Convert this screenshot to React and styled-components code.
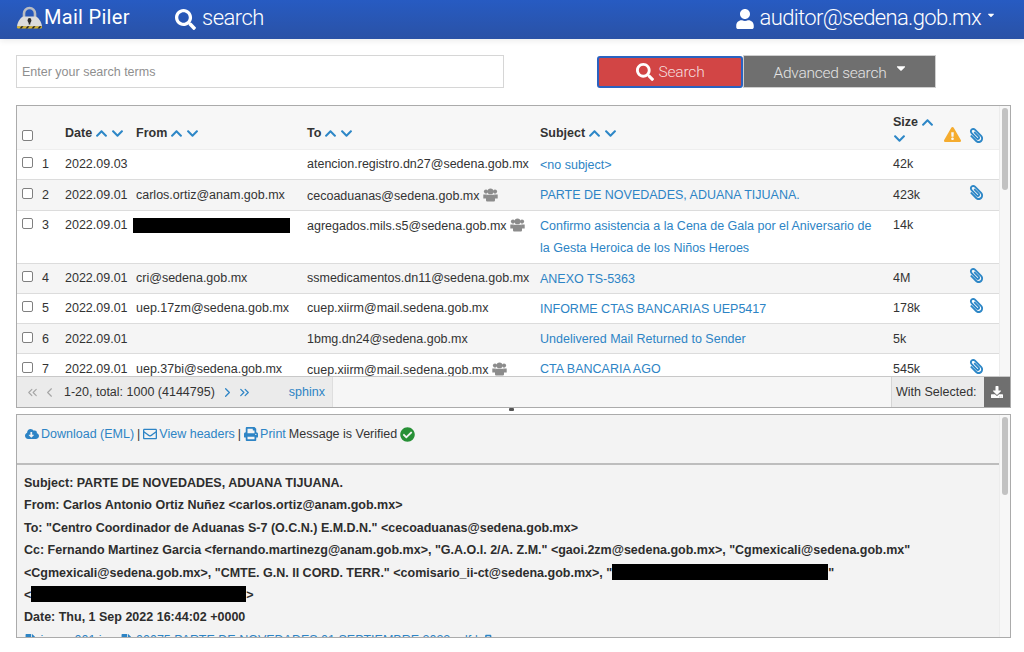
import React from "react";
import styled, { createGlobalStyle } from "styled-components";
import {
  FaSearch, FaUser, FaPaperclip, FaExclamationTriangle, FaChevronUp, FaChevronDown,
  FaCloudDownloadAlt, FaRegEnvelope, FaPrint, FaCheckCircle, FaDownload, FaCaretDown, FaFile, FaBriefcase,
} from "react-icons/fa";
import { ChevronsLeft, ChevronLeft, ChevronRight, ChevronsRight } from "lucide-react";

const Global = createGlobalStyle`
  html, body { margin: 0; padding: 0; background: #fff; }
  body { font-family: "Liberation Sans", Arial, sans-serif; font-size: 12.5px; color: #333; width: 1024px; height: 652px; overflow: hidden; }
  * { box-sizing: border-box; }
`;

const Page = styled.div`display: flex; flex-direction: column; width: 1024px; height: 652px;`;
const TopBar = styled.header`
  height: 39px; flex: none; display: flex; align-items: flex-start; padding-top: 5px; color: #fff;
  background: linear-gradient(#275bc2, #2a52a6);
  box-shadow: 0 2px 6px rgba(0,0,0,.08);
  font-family: Roboto, sans-serif; font-weight: 300;
`;
const Brand = styled.div`display: flex; align-items: center; margin-left: 16px; width: 159px; font-size: 20px; font-family: Roboto, sans-serif; font-weight: 400; letter-spacing: .3px;`;
const NavSearch = styled.div`display: flex; align-items: center; gap: 6px; font-size: 22px; letter-spacing: -.5px; svg { font-size: 21px; margin-top: 4px; }`;
const UserMenu = styled.div`margin-left: auto; margin-right: 28px; display: flex; align-items: center; gap: 5px; font-size: 22px; letter-spacing: -.66px;
  svg.user { font-size: 20px; margin-top: 3px; } svg.caret { font-size: 10px; margin: -6px 0 0 0; }`;

const SearchRow = styled.div`height: 66px; flex: none; padding: 16px 0 0 16px; display: flex; align-items: flex-start;`;
const SearchInput = styled.input`
  width: 488px; height: 33px; border: 1px solid #d6d6d6; padding: 0 5px; font: 12.5px "Liberation Sans", Arial, sans-serif; outline: none; background: #fff;
  &::placeholder { color: #8f8f8f; opacity: 1; }
`;
const SearchBtn = styled.button`
  width: 146px; height: 32px; margin: 1px 0 0 93px; background: #d24545; border: 2px solid #2a62c0; border-radius: 3px; color: #f5dede;
  display: flex; align-items: center; justify-content: center; gap: 5px; font: 300 15.5px Roboto, sans-serif; letter-spacing: -.2px; padding: 0;
  svg { color: #fff; font-size: 18px; }
`;
const AdvBtn = styled.button`
  width: 193px; height: 33px; background: #6f6f6f; border: 1px solid #cfcfcf; color: #e4e4e4; display: flex; align-items: center; justify-content: center; gap: 8px;
  font: 300 15.5px Roboto, sans-serif; letter-spacing: -.25px; padding: 2px 0 0 3px;
  svg { color: #fff; font-size: 14px; margin-top: -9px; }
`;

const Panel = styled.section`
  margin-left: 16px; width: 995px; border: 1px solid #ababab; flex: none; display: flex; flex-direction: column; overflow: hidden;
  background: ${p => p.$bg || "#fff"}; height: ${p => p.$h}px;
`;
const ScrollWrap = styled.div`flex: 1; min-height: 0; display: flex;`;
const Scroller = styled.div`flex: 1; min-width: 0; overflow: hidden;`;
const Track = styled.div`
  width: 11px; flex: none; background: #f7f7f7; border-left: 1px solid #ececec; padding: 2px 2px 0 2px;
  &::before { content: ""; display: block; height: ${p => p.$thumb}px; background: #c2c2c2; border-radius: 3px; }
`;
const Cols = `grid-template-columns: 25px 23px 71px 171px 233px 353px 51px 25px 31px;`;
const HeadRow = styled.div`
  display: grid; ${Cols} height: 44px; background: #f7f7f7; border-bottom: 1px solid #eee; font-weight: 700; align-items: center;
`;
const Row = styled.div`
  display: grid; ${Cols} background: ${p => p.$alt ? "#f5f5f5" : "#fff"}; border-bottom: 1px solid #dcdcdc; height: ${p => p.$h || 30.3}px; padding-top: 7.4px; line-height: 15px; color: #333;
`;
const HeadCell = styled.div`display: flex; flex-wrap: wrap; align-items: center; column-gap: 3px; padding-top: ${p => p.$pad ?? 11}px; line-height: ${p => p.$lh || 15}px;`;
const Arrow = styled.span`color: #2d87c7; display: inline-flex; font-size: 13px;`;
const Check = styled.span`display: block; width: 11px; height: 11px; border: 1px solid #808080; border-radius: 2px; background: #fff; margin: ${p => p.$m || "0 0 0 5px"};`;
const Link = styled.a`color: #2d84c5; text-decoration: none;`;
const Subject = styled(Link)`display: block; line-height: 22.5px; margin-top: -3.4px; padding-right: 14px;`;
const GroupSvg = styled.svg`margin-left: 3px; vertical-align: -2px;`;
const Clip = styled.span`color: #2d87c7; font-size: 15px; display: block; width: 15px; transform: scaleX(-1); margin-top: ${p => p.$mt ?? -3}px; line-height: 1;`;
const Warn = styled.span`color: #f5ac2f; font-size: 17px; line-height: 1; display: block; margin-top: 17px;`;
const BlackInline = styled.span`display: inline-block; background: #000; height: ${p => p.$hh || 15}px; width: ${p => p.$w}px; vertical-align: ${p => p.$va || "-3px"}; margin-left: ${p => p.$ml || 0}px;`;

const Pager = styled.div`height: 31px; flex: none; border-top: 1px solid #c8c8c8; display: flex; background: #f6f6f6; align-items: stretch;`;
const PagerLeft = styled.div`width: 316px; background: #ebebeb; border-right: 1px solid #dedede; display: flex; align-items: center; padding-left: 8px;`;
const PageIcons = styled.span`display: inline-flex; gap: ${p => p.$gap || 6}px; color: ${p => p.$on ? "#2d84c5" : "#a5a5a5"}; margin: ${p => p.$m};`;
const Sphinx = styled(Link)`margin-left: 37px;`;
const SelectedLabel = styled.div`margin-left: auto; width: 93px; background: #ebebeb; border-left: 1px solid #d5d5d5; display: flex; align-items: center; padding-left: 4px; white-space: nowrap;`;
const DlBtn = styled.div`width: 26px; background: #6f6f6f; color: #fff; display: flex; align-items: center; justify-content: center; font-size: 12px;`;

const Splitter = styled.div`height: 6px; flex: none; display: flex; justify-content: center;
  &::before { content: ""; display: block; width: 5px; height: 3px; background: #555; margin: 0 0 0 -1px; border-radius: 1px; }
`;

const Toolbar = styled.div`height: 50px; flex: none; border-bottom: 2px solid #bdbdbd; padding: 10px 0 0 8px; line-height: 18px; white-space: nowrap; display: flex; align-items: flex-start; gap: 3px; background: #f3f3f3;`;
const ToolLink = styled(Link)`display: inline-flex; align-items: center; gap: 2px; svg { font-size: 14px; }`;
const Verified = styled.span`color: #279036; display: inline-flex; font-size: 15px; margin-top: 1.5px;`;
const Sep = styled.span`color: #333;`;
const Headers = styled.div`padding: 7px 0 0 7px; font-weight: 700; line-height: 22.4px; font-size: 12.5px; color: #2d2d2d; background: #f3f3f3;`;
const Attach = styled.div`display: flex; align-items: center; gap: 4px; color: #2d84c5; font-weight: 400; font-size: 12.5px; white-space: nowrap;`;

const rows = [
  { n: 1, date: "2022.09.03", from: "", to: "atencion.registro.dn27@sedena.gob.mx", subj: "<no subject>", size: "42k" },
  { n: 2, alt: 1, date: "2022.09.01", from: "carlos.ortiz@anam.gob.mx", to: "cecoaduanas@sedena.gob.mx", grp: 1, subj: "PARTE DE NOVEDADES, ADUANA TIJUANA.", size: "423k", clip: 1 },
  { n: 3, h: 53, date: "2022.09.01", black: 1, to: "agregados.mils.s5@sedena.gob.mx", grp: 1, subj: "Confirmo asistencia a la Cena de Gala por el Aniversario de la Gesta Heroica de los Niños Heroes", size: "14k" },
  { n: 4, alt: 1, date: "2022.09.01", from: "cri@sedena.gob.mx", to: "ssmedicamentos.dn11@sedena.gob.mx", subj: "ANEXO TS-5363", size: "4M", clip: 1 },
  { n: 5, date: "2022.09.01", from: "uep.17zm@sedena.gob.mx", to: "cuep.xiirm@mail.sedena.gob.mx", subj: "INFORME CTAS BANCARIAS UEP5417", size: "178k", clip: 1 },
  { n: 6, alt: 1, date: "2022.09.01", from: "", to: "1bmg.dn24@sedena.gob.mx", subj: "Undelivered Mail Returned to Sender", size: "5k" },
  { n: 7, date: "2022.09.01", from: "uep.37bi@sedena.gob.mx", to: "cuep.xiirm@mail.sedena.gob.mx", grp: 1, subj: "CTA BANCARIA AGO", size: "545k", clip: 1 },
];

const Sort = () => (<><Arrow><FaChevronUp /></Arrow><Arrow><FaChevronDown /></Arrow></>);

const GroupIcon = () => (
  <GroupSvg width="15" height="14" viewBox="0 0 15 14" fill="#8c8c8c">
    <circle cx="3" cy="3.6" r="2.1" />
    <circle cx="12" cy="3.6" r="2.1" />
    <circle cx="7.5" cy="3.4" r="2.9" />
    <path d="M0.3 6.5h3.6L3.2 10.6H0.3zM11.1 6.5h3.6v4.1h-2.9z" />
    <path d="M4.3 6.8h6.4c.9 0 1.3.9 1.3 2.1v3.3c0 .9-.6 1.3-1.3 1.3H4.3c-.7 0-1.3-.4-1.3-1.3V8.9c0-1.2.4-2.1 1.3-2.1z" />
  </GroupSvg>
);

const Logo = () => (
  <svg width="27" height="23" viewBox="0 0 27 23" style={{ marginRight: 1, flex: "none" }}>
    <path d="M8 11V7.5a5.5 5.5 0 0 1 11 0V11" fill="none" stroke="#b9bcc2" strokeWidth="2.6" />
    <path d="M1 20.5C1.5 16 4 12 7 10.5h13c3 1.5 5.5 5.5 6 10z" fill="#dcdcdc" />
    <ellipse cx="13.5" cy="14.5" rx="1.9" ry="2.4" fill="#2c2c2c" />
    <path d="M12.7 15.5h1.6v3h-1.6z" fill="#2c2c2c" />
    <path d="M1 20.2h25c.3 1.4-.5 2.4-1.6 2.4H2.6C1.5 22.6.7 21.6 1 20.2z" fill="#d8b52c" />
    <path d="M3.5 22.6l2-2.4h2l-2 2.4zM9.5 22.6l2-2.4h2l-2 2.4zM15.5 22.6l2-2.4h2l-2 2.4zM21.5 22.6l2-2.4h2l-2 2.4z" fill="#222" />
  </svg>
);

export default function App() {
  return (
    <Page>
      <Global />
      <TopBar>
        <Brand><Logo />Mail Piler</Brand>
        <NavSearch><FaSearch />search</NavSearch>
        <UserMenu><FaUser className="user" />auditor@sedena.gob.mx<FaCaretDown className="caret" /></UserMenu>
      </TopBar>
      <SearchRow>
        <SearchInput placeholder="Enter your search terms" />
        <SearchBtn><FaSearch />Search</SearchBtn>
        <AdvBtn>Advanced search<FaCaretDown /></AdvBtn>
      </SearchRow>
      <Panel $h={303}>
        <ScrollWrap>
          <Scroller>
            <HeadRow>
              <Check $m="15px 0 0 5px" />
              <span />
              <HeadCell>Date <Sort /></HeadCell>
              <HeadCell>From <Sort /></HeadCell>
              <HeadCell>To <Sort /></HeadCell>
              <HeadCell>Subject <Sort /></HeadCell>
              <HeadCell $pad={3} $lh={19}>Size <Sort /></HeadCell>
              <Warn><FaExclamationTriangle /></Warn>
              <Clip $mt={18}><FaPaperclip /></Clip>
            </HeadRow>
            {rows.map(r => (
              <Row key={r.n} $alt={r.alt} $h={r.h}>
                <Check />
                <span>{r.n}</span>
                <span>{r.date}</span>
                <span>{r.black ? <BlackInline $w={157} $ml={-3} $va="1px" /> : r.from}</span>
                <span>{r.to}{r.grp ? <GroupIcon /> : null}</span>
                <Subject href="#">{r.subj}</Subject>
                <span>{r.size}</span>
                <span />
                <span>{r.clip ? <Clip><FaPaperclip /></Clip> : null}</span>
              </Row>
            ))}
          </Scroller>
          <Track $thumb={82} />
        </ScrollWrap>
        <Pager>
          <PagerLeft>
            <PageIcons $gap={2} $m="0 7px 0 0"><ChevronsLeft size={15} strokeWidth={1.8} /><ChevronLeft size={15} strokeWidth={1.8} /></PageIcons>
            1-20, total: 1000 (4144795)
            <PageIcons $on $gap={2} $m="0 0 0 5px"><ChevronRight size={15} strokeWidth={2} /><ChevronsRight size={15} strokeWidth={2} /></PageIcons>
            <Sphinx href="#">sphinx</Sphinx>
          </PagerLeft>
          <SelectedLabel>With Selected:</SelectedLabel>
          <DlBtn><FaDownload /></DlBtn>
        </Pager>
      </Panel>
      <Splitter />
      <Panel $h={224} $bg="#f3f3f3">
        <ScrollWrap>
          <Scroller>
            <Toolbar>
              <ToolLink href="#"><FaCloudDownloadAlt />Download (EML)</ToolLink><Sep>|</Sep>
              <ToolLink href="#"><FaRegEnvelope />View headers</ToolLink><Sep>|</Sep>
              <ToolLink href="#"><FaPrint />Print</ToolLink>
              <span>Message is Verified</span>
              <Verified><FaCheckCircle /></Verified>
            </Toolbar>
            <Headers>
              <div>Subject: PARTE DE NOVEDADES, ADUANA TIJUANA.</div>
              <div>From: Carlos Antonio Ortiz Nuñez &lt;carlos.ortiz@anam.gob.mx&gt;</div>
              <div>To: "Centro Coordinador de Aduanas S-7 (O.C.N.) E.M.D.N." &lt;cecoaduanas@sedena.gob.mx&gt;</div>
              <div>Cc: Fernando Martinez Garcia &lt;fernando.martinezg@anam.gob.mx&gt;, "G.A.O.I. 2/A. Z.M." &lt;gaoi.2zm@sedena.gob.mx&gt;, "Cgmexicali@sedena.gob.mx" &lt;Cgmexicali@sedena.gob.mx&gt;, "CMTE. G.N. II CORD. TERR." &lt;comisario_ii-ct@sedena.gob.mx&gt;, "<BlackInline $w={216} $hh={16} />"</div>
              <div>&lt;<BlackInline $w={215} $hh={16} />&gt;</div>
              <div>Date: Thu, 1 Sep 2022 16:44:02 +0000</div>
              <Attach><FaFile />image001.jpg<FaFile />00075 PARTE DE NOVEDADES 01 SEPTIEMBRE 2022.pdf | <FaBriefcase /></Attach>
            </Headers>
          </Scroller>
          <Track $thumb={78} />
        </ScrollWrap>
      </Panel>
    </Page>
  );
}
